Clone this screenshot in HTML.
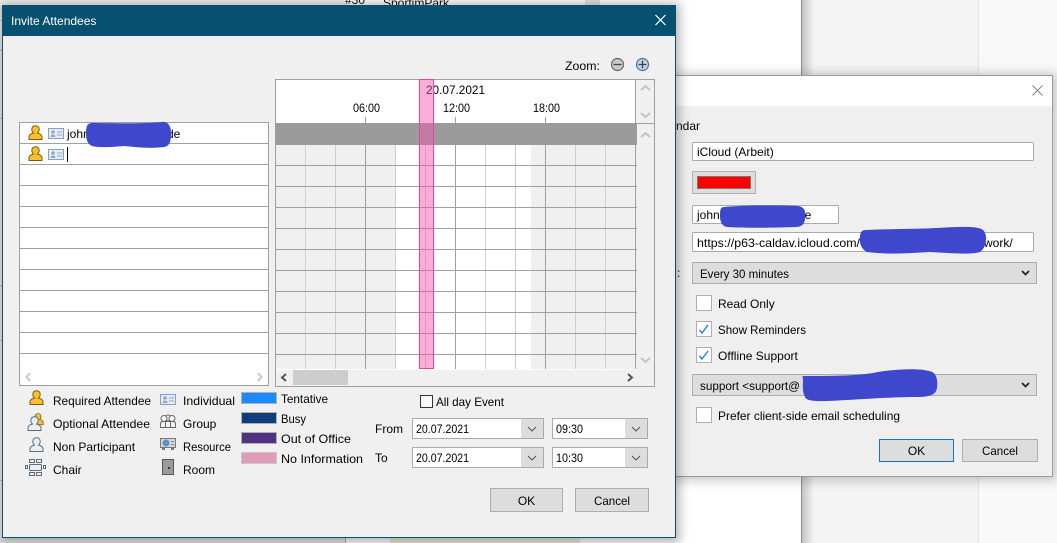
<!DOCTYPE html>
<html><head><meta charset="utf-8"><style>
html,body{margin:0;padding:0;width:1057px;height:543px;overflow:hidden;background:#fff}
svg{display:block;position:absolute;left:0;top:0}
text{font-family:"Liberation Sans",sans-serif;font-size:12px;fill:#000}
</style></head><body>
<svg width="1057" height="543" viewBox="0 0 1057 543" xmlns="http://www.w3.org/2000/svg">
<defs>
<filter id="b" x="-10%" y="-10%" width="120%" height="120%"><feGaussianBlur stdDeviation="5"/></filter>
<linearGradient id="sh"><stop offset="0" stop-color="#c4c4c4"/><stop offset="1" stop-color="#f3f3f3"/></linearGradient>
<g id="person"><path d="M1 14.5V12c0-2.500 2.500-3.500 4.500-4C4.200 7 3.800 5.500 3.800 4.300 3.800 2.200 5.300.8 7.500.8s3.700 1.400 3.700 3.500c0 1.200-.4 2.700-1.700 3.700 2 .5 4.500 1.500 4.500 4v2.500z" fill="#fbc02d" stroke="#7d5a10"/></g>
<g id="card"><rect x=".5" y=".5" width="15" height="10" fill="#e4ecf8" stroke="#7f9fd8"/><circle cx="5" cy="4" r="1.800" fill="#a4a4a4"/><path d="M2.500 9c0-2 1.300-2.500 2.500-2.500S7.500 7 7.500 9z" fill="#a4a4a4"/><path d="M9 4h5M9 7h5" stroke="#8da5d0"/></g>
<g id="ghost"><path d="M1 14.500V12c0-2.500 2.500-3.500 4.500-4C4.200 7 3.800 5.500 3.800 4.300 3.800 2.200 5.300.8 7.500.8s3.700 1.400 3.700 3.500c0 1.200-.4 2.700-1.700 3.700 2 .5 4.500 1.500 4.500 4v2.500z" fill="#e8f0f6" stroke="#5d6b78"/></g>
</defs>

<!-- background -->
<rect width="1057" height="543" fill="#fff"/>
<rect x="0" y="0" width="345" height="543" fill="#f0f0f0"/>
<rect x="802" y="0" width="176" height="543" fill="#f3f3f3"/>
<rect x="978" y="0" width="1" height="543" fill="#e2e2e2"/>
<rect x="979" y="0" width="78" height="543" fill="#f9f9f9"/>
<rect x="801" y="0" width="1" height="543" fill="#8a8a8a"/>
<rect x="802" y="0" width="12" height="543" fill="url(#sh)"/>
<rect x="585" y="0" width="15" height="5" fill="#e0e0e0"/>
<text x="345" y="4" font-size="11">#30</text>
<text x="383" y="7">SportimPark</text>
<rect x="390" y="537" width="190" height="6" fill="#e8ecd8"/>
<path d="M0 20.500h2M0 50.500h2M0 118.500h2M0 285.500h2M0 340.500h2M0 480.500h2" stroke="#bbb"/>
<rect x="0" y="537" width="345" height="6" fill="#e4e4e4"/>
<rect x="345" y="537" width="1" height="6" fill="#aaa"/>

<!-- dialog 2 -->
<rect x="670" y="73" width="387" height="408" fill="#555" opacity=".3" filter="url(#b)"/>
<rect x="670" y="76" width="382" height="400" fill="#efefef"/>
<rect x="670" y="76" width="382" height="30" fill="#fff"/>
<path d="M670 75.500H1052.500V476.500H670" fill="none" stroke="#9b9b9b"/>
<path d="M1032.500 85.500l10 10M1042.500 85.500l-10 10" stroke="#8a8a8a" stroke-width="1.100"/>
<text x="676" y="130">ndar</text>
<rect x="692.500" y="142.500" width="341" height="18" rx="1" fill="#fff" stroke="#aaa"/>
<text x="697" y="156">iCloud (Arbeit)</text>
<rect x="692.500" y="171.500" width="63" height="22" fill="#ddd" stroke="#b0b0b0"/>
<rect x="697.500" y="176.500" width="53" height="12" fill="#f00" stroke="#777"/>
<rect x="692.500" y="205.500" width="146" height="18" rx="1" fill="#fff" stroke="#aaa"/>
<text x="697" y="219">john</text><text x="802" y="219">le</text>
<rect x="692.500" y="232.500" width="341" height="19" rx="1" fill="#fff" stroke="#aaa"/>
<text x="697" y="247" textLength="163" lengthAdjust="spacingAndGlyphs">https://p63-caldav.icloud.com/</text><text x="984" y="247">work/</text>
<text x="677" y="277">:</text>
<rect x="692.500" y="262.500" width="344" height="21" fill="#ddd" stroke="#adadad"/>
<text x="700" y="278" textLength="89" lengthAdjust="spacingAndGlyphs">Every 30 minutes</text>
<path d="M1022 271l3.500 3.500 3.500-3.500" fill="none" stroke="#222" stroke-width="1.800"/>
<rect x="696.500" y="295.500" width="15" height="15" fill="#fff" stroke="#b0b0b0"/>
<text x="718" y="308">Read Only</text>
<rect x="696.500" y="321.500" width="15" height="15" fill="#fff" stroke="#b0b0b0"/>
<path d="M699.500 330l2.500 3 6-8" fill="none" stroke="#1c82dc" stroke-width="1.400"/>
<text x="718" y="334" textLength="88" lengthAdjust="spacingAndGlyphs">Show Reminders</text>
<rect x="696.500" y="347.500" width="15" height="15" fill="#fff" stroke="#b0b0b0"/>
<path d="M699.500 356l2.500 3 6-8" fill="none" stroke="#1c82dc" stroke-width="1.400"/>
<text x="718" y="360">Offline Support</text>
<rect x="692.500" y="374.500" width="344" height="21" fill="#ddd" stroke="#adadad"/>
<text x="700" y="390" textLength="100" lengthAdjust="spacingAndGlyphs">support &lt;support@</text>
<path d="M1022 383l3.500 3.500 3.500-3.500" fill="none" stroke="#222" stroke-width="1.800"/>
<rect x="696.500" y="407.500" width="15" height="15" fill="#fff" stroke="#b0b0b0"/>
<text x="718" y="420" textLength="182" lengthAdjust="spacingAndGlyphs">Prefer client-side email scheduling</text>
<rect x="879.500" y="439.500" width="74" height="22" fill="#ddd" stroke="#0b78c8"/>
<text x="916.500" y="455" text-anchor="middle">OK</text>
<rect x="962.500" y="439.500" width="75" height="22" fill="#ddd" stroke="#adadad"/>
<text x="982" y="455" textLength="36" lengthAdjust="spacingAndGlyphs">Cancel</text>
<!-- scribbles on dialog 2 -->
<path d="M724 207c20-2 55-2 74-1 7 1 8 6 7 12 0 6-3 9-10 9-25 1-50 1-68 0-6-1-7-7-7-11 0-5 0-9 4-9z" fill="#3f48cc"/>
<path d="M866 230c25-1 50-1 70-2 20-1 44-3 48 3 4 6 2 17-4 21-10 3-30 1-50 0-20 1-40 3-63 0-6-3-8-10-7-15 0-5 2-7 6-7z" fill="#3f48cc"/>
<path d="M803 376c30 0 50 0 70-3 20-4 45-5 56-2 8 1 9 10 8 17-1 7-8 9-20 9-25 0-50 2-70 3-20 1-40 3-42-3-3-6-2-12-2-16 0-4-1-5 0-5z" fill="#3f48cc"/>

<!-- dialog 1 -->
<rect x="0" y="3" width="680" height="540" fill="#444" opacity=".38" filter="url(#b)"/>
<rect x="2" y="5" width="674" height="533" fill="#07506f"/>
<rect x="3" y="36" width="672" height="501" fill="#f0f0f0"/>
<text x="11" y="25" style="fill:#fff">Invite Attendees</text>
<path d="M655.500 15l10 10M665.500 15l-10 10" stroke="#fff" stroke-width="1.200"/>

<text x="565" y="70" textLength="35" lengthAdjust="spacingAndGlyphs">Zoom:</text>
<circle cx="617.500" cy="64.500" r="6" fill="#c8c8c8" stroke="#666" stroke-width="1.200"/>
<path d="M613.500 64.500h8" stroke="#444" stroke-width="1.300"/>
<circle cx="642.500" cy="64.500" r="6" fill="#c4d2e4" stroke="#54708f" stroke-width="1.200"/>
<path d="M638.500 64.500h8M642.500 60.500v8" stroke="#2f4560" stroke-width="1.300"/>

<!-- attendee list -->
<rect x="19.500" y="122.500" width="249" height="263" fill="#fff" stroke="#a0a0a0"/>
<path d="M20 143.500H268M20 164.500H268M20 185.500H268M20 206.500H268M20 227.500H268M20 248.500H268M20 269.500H268M20 290.500H268M20 311.500H268M20 332.500H268M20 353.500H268" stroke="#a0a0a0"/>
<use href="#person" x="28" y="125"/>
<use href="#card" x="48" y="128"/>
<use href="#person" x="28" y="146"/>
<use href="#card" x="48" y="149"/>
<text x="67" y="138">john</text>
<text x="167" y="138">de</text>
<rect x="67" y="147" width="1" height="15" fill="#000"/>
<path d="M30 373l-3.500 4 3.500 4M258 373l3.500 4-3.500 4" fill="none" stroke="#c8c8c8" stroke-width="2"/>
<path d="M92 123c20 0 50 1 70-1 6-1 9 4 9 11 0 8-1 13-7 14-15 2-30 0-40-1-10 1-25 2-32 0-5-2-6-8-6-13 0-6 1-10 6-10z" fill="#3f48cc"/>

<!-- timeline -->
<rect x="275.500" y="79.500" width="379" height="307" fill="#f0f0f0" stroke="#a0a0a0"/>
<rect x="276" y="80" width="359" height="43" fill="#fff"/>
<path d="M635.500 80V123.500M637 123.500H654" stroke="#a0a0a0"/>
<rect x="396" y="145" width="135" height="224" fill="#fff"/>
<path d="M305.500 145V369M335.500 145V369M395.500 145V369M425.500 145V369M485.500 145V369M515.500 145V369M575.500 145V369M605.500 145V369" stroke="#cfcfcf"/>
<path d="M365.500 145V369M455.500 145V369M545.500 145V369M635.500 145V369M365.500 117V123M455.500 117V123M545.500 117V123" stroke="#a0a0a0"/>
<path d="M276 165.500H637M276 186.500H637M276 207.500H637M276 228.500H637M276 249.500H637M276 270.500H637M276 291.500H637M276 312.500H637M276 333.500H637M276 354.500H637" stroke="#a0a0a0"/>
<rect x="275" y="123" width="362" height="22" fill="#9b9b9b"/>
<rect x="276" y="369" width="361" height="1" fill="#fff"/>
<rect x="293" y="370" width="55" height="15" fill="#cdcdcd"/>
<path d="M286 374l-4 3.500 4 3.500M628 374l4 3.500-4 3.500" fill="none" stroke="#555" stroke-width="2"/>
<path d="M641 90l4.500-4 4.500 4M641 113l4.500 4 4.500-4M641 137l4.500-4 4.500 4M641 358l4.500 4 4.500-4" fill="none" stroke="#c4c4c4" stroke-width="2"/>
<text x="426" y="94" textLength="59" lengthAdjust="spacingAndGlyphs">20.07.2021</text>
<text x="353" y="112" textLength="27" lengthAdjust="spacingAndGlyphs">06:00</text>
<text x="443" y="112" textLength="27" lengthAdjust="spacingAndGlyphs">12:00</text>
<text x="533" y="112" textLength="27" lengthAdjust="spacingAndGlyphs">18:00</text>
<rect x="419.500" y="79.500" width="14" height="289" fill="#f056b0" fill-opacity=".48" stroke="#e0489b"/>

<!-- legend -->
<use href="#person" x="29" y="390"/>
<text x="53" y="405" textLength="98" lengthAdjust="spacingAndGlyphs">Required Attendee</text>
<g transform="translate(32 413) scale(.8)"><use href="#person"/></g>
<use href="#ghost" x="27" y="416"/>
<text x="53" y="428" textLength="97" lengthAdjust="spacingAndGlyphs">Optional Attendee</text>
<use href="#ghost" x="29" y="437"/>
<text x="53" y="451">Non Participant</text>
<g fill="#e8eef2" stroke="#5d6b78">
<rect x="29.500" y="459.500" width="5" height="3"/><rect x="36.500" y="459.500" width="5" height="3"/>
<rect x="29.500" y="472.500" width="5" height="3"/><rect x="36.500" y="472.500" width="5" height="3"/>
<rect x="29.500" y="464.500" width="12" height="6" rx="1"/>
<rect x="25.500" y="465.500" width="2" height="3"/><rect x="43.500" y="465.500" width="2" height="3"/>
</g>
<text x="53" y="474">Chair</text>
<use href="#card" x="160" y="394"/>
<text x="183" y="405" textLength="52" lengthAdjust="spacingAndGlyphs">Individual</text>
<g fill="#f2f2f2" stroke="#666"><circle cx="168" cy="418" r="3"/><circle cx="164" cy="418.500" r="3"/><circle cx="172" cy="418.500" r="3"/><path d="M160.500 427.500v-4c0-1.500 1.500-2 3-2h9c1.500 0 3 .5 3 2v4zM165.500 421.500v6M170.500 421.500v6"/></g>
<rect x="160.500" y="438.500" width="15" height="9" fill="#d6d6d6" stroke="#777"/>
<circle cx="166" cy="443" r="3.500" fill="#5b8ed0"/>
<path d="M171 441.500h3M171 444.500h3" stroke="#888"/>
<rect x="162" y="448" width="3" height="2" fill="#777"/><rect x="171" y="448" width="3" height="2" fill="#777"/>
<text x="183" y="428">Group</text>
<text x="183" y="451" textLength="48" lengthAdjust="spacingAndGlyphs">Resource</text>
<rect x="162.500" y="459.500" width="11" height="15" fill="#9b9b9b" stroke="#555"/>
<rect x="168" y="467" width="2" height="2" fill="#333"/>
<text x="183" y="474">Room</text>

<rect x="241.500" y="392.500" width="35" height="11" fill="#1a8cff" stroke="#b0b0b0"/>
<rect x="241.500" y="412.500" width="35" height="11" fill="#103c7e" stroke="#b0b0b0"/>
<rect x="241.500" y="432.500" width="35" height="11" fill="#4f3282" stroke="#b0b0b0"/>
<rect x="241.500" y="452.500" width="35" height="11" fill="#e09aba" stroke="#c8c8c8"/>
<text x="281" y="403" textLength="47" lengthAdjust="spacingAndGlyphs">Tentative</text>
<text x="281" y="423" textLength="25" lengthAdjust="spacingAndGlyphs">Busy</text>
<text x="281" y="443" textLength="70" lengthAdjust="spacingAndGlyphs">Out of Office</text>
<text x="281" y="463" textLength="82" lengthAdjust="spacingAndGlyphs">No Information</text>

<!-- controls -->
<rect x="420.500" y="395.500" width="12" height="12" fill="#f8f8f8" stroke="#333"/>
<text x="436" y="406" textLength="68" lengthAdjust="spacingAndGlyphs">All day Event</text>
<text x="375" y="433">From</text>
<text x="375" y="462">To</text>
<rect x="412.500" y="418.500" width="131" height="20" fill="#fff" stroke="#aaa"/>
<rect x="521" y="419" width="22" height="19" fill="#ddd"/>
<rect x="552.500" y="418.500" width="95" height="20" fill="#fff" stroke="#aaa"/>
<rect x="625" y="419" width="22" height="19" fill="#ddd"/>
<rect x="412.500" y="447.500" width="131" height="20" fill="#fff" stroke="#aaa"/>
<rect x="521" y="448" width="22" height="19" fill="#ddd"/>
<rect x="552.500" y="447.500" width="95" height="20" fill="#fff" stroke="#aaa"/>
<rect x="625" y="448" width="22" height="19" fill="#ddd"/>
<path d="M528 427l4 4 4-4M632 427l4 4 4-4M528 456l4 4 4-4M632 456l4 4 4-4" fill="none" stroke="#555" stroke-width="1.100"/>
<text x="416" y="433" textLength="53" lengthAdjust="spacingAndGlyphs">20.07.2021</text>
<text x="556" y="433" textLength="27" lengthAdjust="spacingAndGlyphs">09:30</text>
<text x="416" y="462" textLength="53" lengthAdjust="spacingAndGlyphs">20.07.2021</text>
<text x="556" y="462" textLength="27" lengthAdjust="spacingAndGlyphs">10:30</text>
<rect x="490.500" y="488.500" width="72" height="23" fill="#ddd" stroke="#adadad"/>
<text x="526.500" y="505" text-anchor="middle">OK</text>
<rect x="575.500" y="488.500" width="73" height="23" fill="#ddd" stroke="#adadad"/>
<text x="594" y="505" textLength="36" lengthAdjust="spacingAndGlyphs">Cancel</text>
</svg>
</body></html>
